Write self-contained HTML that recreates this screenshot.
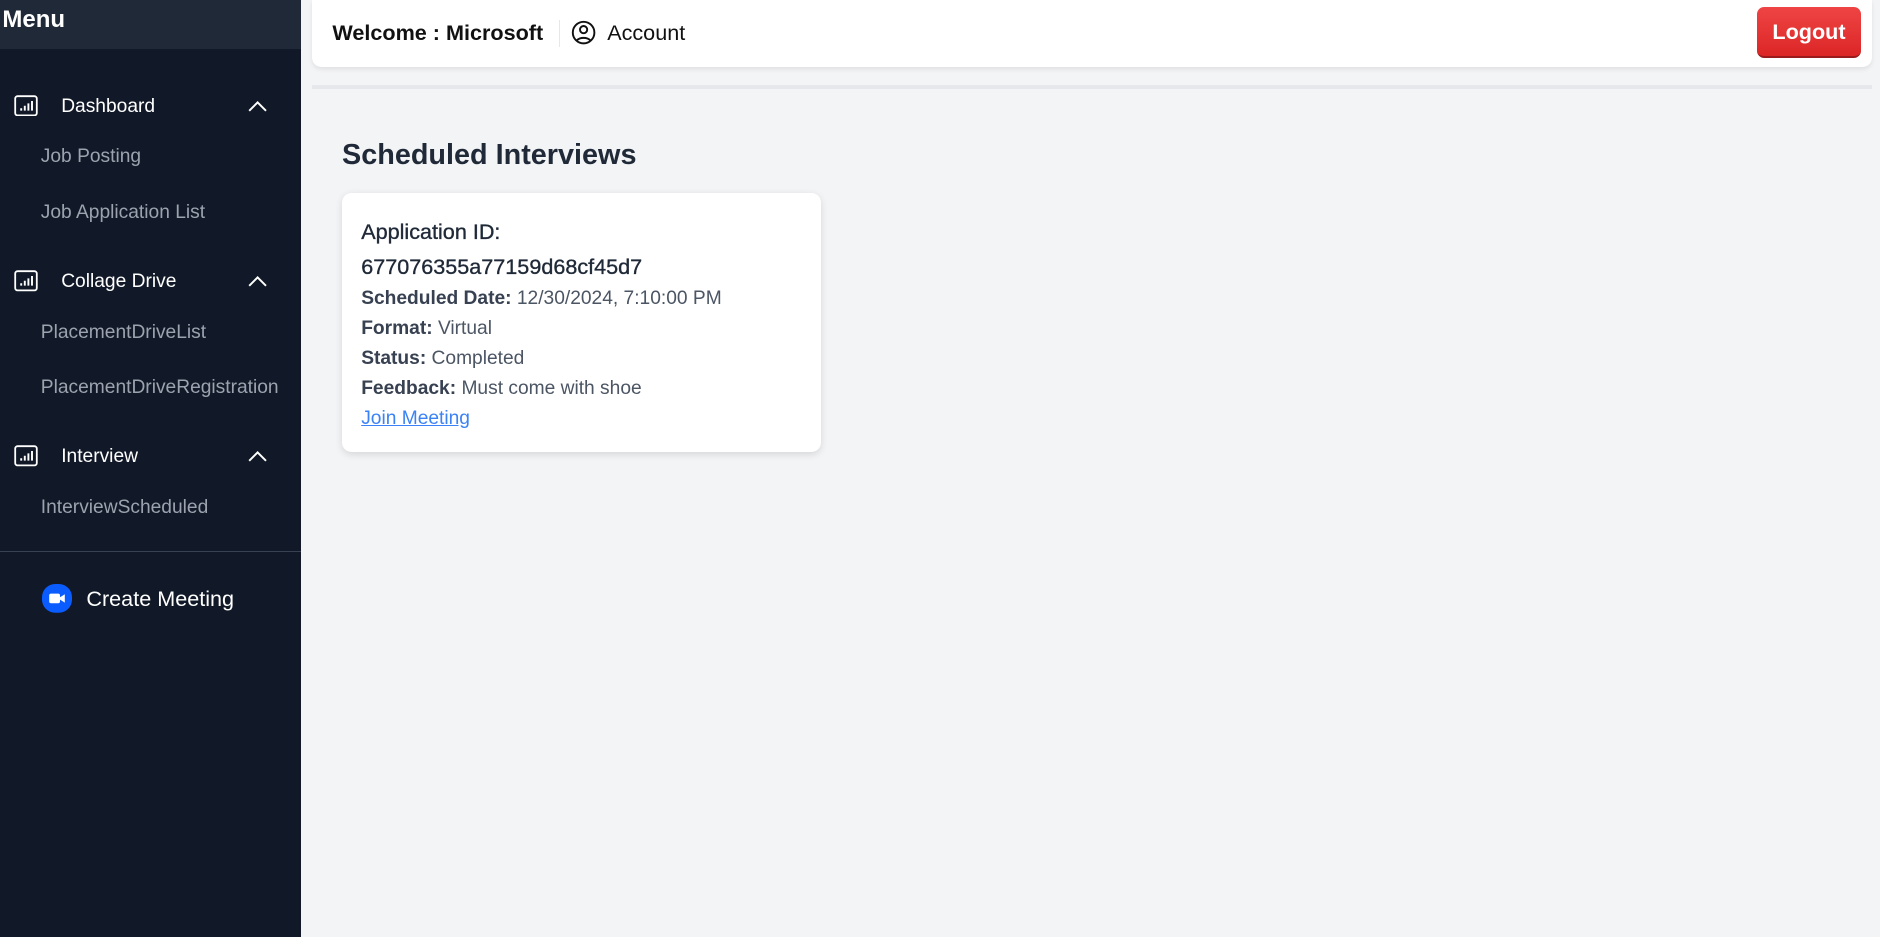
<!DOCTYPE html>
<html><head><meta charset="utf-8"><style>
html{zoom:1.2}
*{box-sizing:border-box;margin:0;padding:0}
body{width:1567px;height:781px;overflow:hidden;background:#f3f4f6;font-family:"Liberation Sans",sans-serif;position:relative}
.side{position:absolute;left:0;top:0;width:251px;height:781px;background:#111827;color:#fff}
.mh{height:41px;background:#1f2937;font-weight:bold;font-size:20px;padding:5px 0 0 2px}
.it{position:absolute;left:0;width:251px}
.it .ic{position:absolute;left:12px;top:-9px}
.it .t{position:absolute;left:51px;top:-8px;font-size:16px;color:#fff}
.it .ch{position:absolute;left:207px;top:-5px}
.sub{position:absolute;left:34px;font-size:16px;color:#9ca3af}
.div{position:absolute;left:0;top:459px;width:251px;height:1px;background:#374151}
.top{position:absolute;left:260px;top:0;width:1300px;height:56px;background:#fff;border-radius:0 0 8px 8px;box-shadow:0 2px 4px rgba(0,0,0,.08)}
.line{position:absolute;left:260px;top:71px;width:1300px;height:3px;background:#e5e7eb}
h2{position:absolute;left:285px;top:116px;font-size:24px;color:#1f2937;font-weight:bold}
.card{position:absolute;left:285px;top:161px;width:399px;height:216px;background:#fff;border-radius:8px;box-shadow:0 2px 6px rgba(0,0,0,.12);padding:18px 16px;color:#4b5563;font-size:16px}
.card .a{font-size:18px;color:#1f2937;line-height:29px;-webkit-text-stroke:0.3px #1f2937}
.card p{line-height:25px}
.card b{color:#374151}
.card a{color:#3b82f6;text-decoration:underline}
</style></head><body>
<div class="side">
<div class="mh">Menu</div>
<div class="it" style="top:88px"><svg class="ic" width="20" height="18" viewBox="0 0 20 18"><rect x="1" y="1" width="18" height="16" rx="2" fill="none" stroke="#fff" stroke-width="1.5"/><path d="M6 13v-2M9 13v-4M12 13v-6M15 13v-8" stroke="#fff" stroke-width="1.6"/></svg><span class="t">Dashboard</span><svg class="ch" width="16" height="10"><path d="M1 9L8 2l7 7" fill="none" stroke="#fff" stroke-width="1.6"/></svg></div>
<div class="sub" style="top:122px">Job Posting</div>
<div class="sub" style="top:168px">Job Application List</div>
<div class="it" style="top:234px"><svg class="ic" width="20" height="18" viewBox="0 0 20 18"><rect x="1" y="1" width="18" height="16" rx="2" fill="none" stroke="#fff" stroke-width="1.5"/><path d="M6 13v-2M9 13v-4M12 13v-6M15 13v-8" stroke="#fff" stroke-width="1.6"/></svg><span class="t">Collage Drive</span><svg class="ch" width="16" height="10"><path d="M1 9L8 2l7 7" fill="none" stroke="#fff" stroke-width="1.6"/></svg></div>
<div class="sub" style="top:268px">PlacementDriveList</div>
<div class="sub" style="top:314px">PlacementDriveRegistration</div>
<div class="it" style="top:380px"><svg class="ic" width="20" height="18" viewBox="0 0 20 18"><rect x="1" y="1" width="18" height="16" rx="2" fill="none" stroke="#fff" stroke-width="1.5"/><path d="M6 13v-2M9 13v-4M12 13v-6M15 13v-8" stroke="#fff" stroke-width="1.6"/></svg><span class="t">Interview</span><svg class="ch" width="16" height="10"><path d="M1 9L8 2l7 7" fill="none" stroke="#fff" stroke-width="1.6"/></svg></div>
<div class="sub" style="top:414px">InterviewScheduled</div>
<div class="div"></div>
<svg style="position:absolute;left:35px;top:487px" width="25" height="24" viewBox="0 0 25 24"><rect x="0" y="0" width="25" height="24" rx="11" fill="#0b5cff"/><rect x="6" y="8" width="9" height="8" rx="1.5" fill="#fff"/><path d="M15 11l4-2.5v7L15 13z" fill="#fff"/></svg>
<div style="position:absolute;left:72px;top:488px;font-size:18px">Create Meeting</div>
</div>
<div class="top">
<div style="position:absolute;left:17px;top:17px;font-size:18px;font-weight:bold;color:#111">Welcome : Microsoft</div>
<div style="position:absolute;left:206px;top:17px;width:1px;height:22px;background:#e5e7eb"></div>
<svg style="position:absolute;left:216px;top:17px" width="21" height="21" viewBox="0 0 21 21"><circle cx="10.5" cy="10.5" r="9" fill="none" stroke="#111" stroke-width="1.6"/><circle cx="10.5" cy="8" r="3" fill="none" stroke="#111" stroke-width="1.6"/><path d="M4.8 17a7 5 0 0 1 11.4 0" fill="none" stroke="#111" stroke-width="1.6"/></svg>
<div style="position:absolute;left:246px;top:17px;font-size:18px;color:#111">Account</div>
<div style="position:absolute;left:1204px;top:6px;width:87px;height:42px;background:linear-gradient(#ef4444,#dc2626);border-radius:6px;border-bottom:2px solid #991b1b;color:#fff;font-size:18px;font-weight:bold;text-align:center;line-height:42px">Logout</div>
</div>
<div class="line"></div>
<h2>Scheduled Interviews</h2>
<div class="card">
<div class="a">Application ID:<br>677076355a77159d68cf45d7</div>
<p><b>Scheduled Date:</b> 12/30/2024, 7:10:00 PM</p>
<p><b>Format:</b> Virtual</p>
<p><b>Status:</b> Completed</p>
<p><b>Feedback:</b> Must come with shoe</p>
<p><a>Join Meeting</a></p>
</div>
</body></html>
